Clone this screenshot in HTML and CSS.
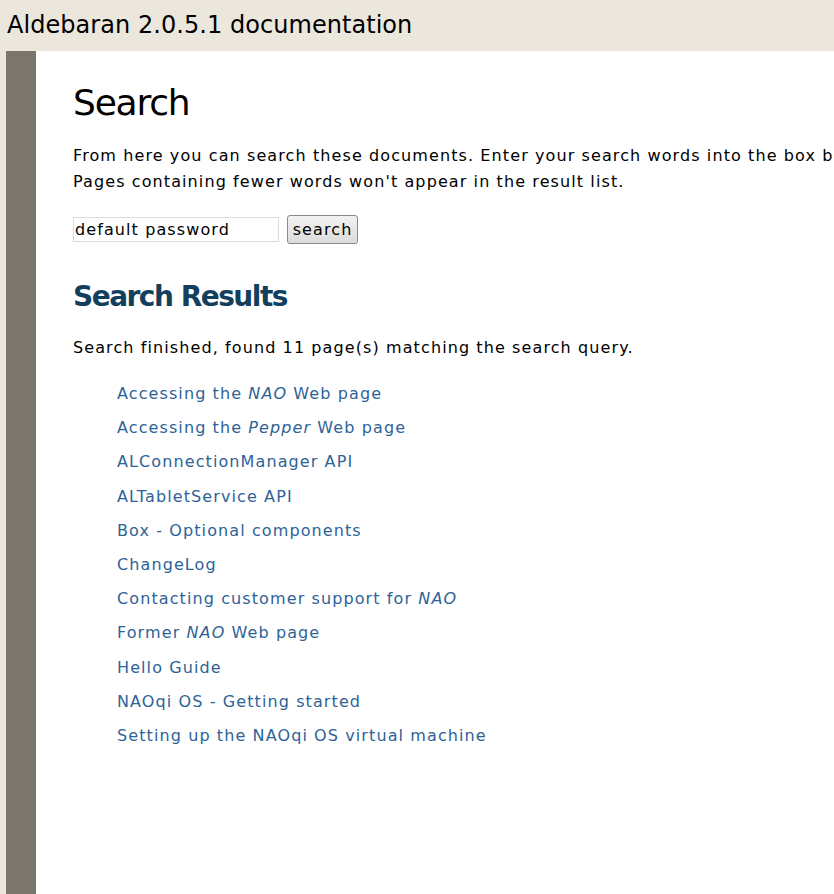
FILE: index.html
```html
<!DOCTYPE html>
<html>
<head>
<meta charset="utf-8">
<title>Search — Aldebaran 2.0.5.1 documentation</title>
<link rel="stylesheet" href="styles.css">
</head>
<body>
<header class="topbar">
  <div class="site-title">Aldebaran 2.0.5.1 documentation</div>
</header>
<div class="layout">
  <div class="edge"></div>
  <div class="sidebar"></div>
  <main class="content">
    <h1 class="title">Search</h1>
    <p class="intro">From here you can search these documents. Enter your search words into the box below and click "search". Note that the search function will automatically search for all of the words.<br>Pages containing fewer words won't appear in the result list.</p>
    <form class="search-form">
      <input class="search-input" type="text" value="default password">
      <button class="search-btn" type="button">search</button>
    </form>
    <h2 class="results-title">Search Results</h2>
    <p class="summary">Search finished, found 11 page(s) matching the search query.</p>
    <ul class="results">
      <li><a href="#">Accessing the <em>NAO</em> Web page</a></li>
      <li><a href="#">Accessing the <em>Pepper</em> Web page</a></li>
      <li><a href="#">ALConnectionManager API</a></li>
      <li><a href="#">ALTabletService API</a></li>
      <li><a href="#">Box - Optional components</a></li>
      <li><a href="#">ChangeLog</a></li>
      <li><a href="#">Contacting customer support for <em>NAO</em></a></li>
      <li><a href="#">Former <em>NAO</em> Web page</a></li>
      <li><a href="#">Hello Guide</a></li>
      <li><a href="#">NAOqi OS - Getting started</a></li>
      <li><a href="#">Setting up the NAOqi OS virtual machine</a></li>
    </ul>
  </main>
</div>
</body>
</html>
```
FILE: styles.css
```css
html, body {
  margin: 0;
  padding: 0;
  height: 100%;
  overflow: hidden;
}
body {
  font-family: "DejaVu Sans", Verdana, sans-serif;
  background: #ece7dd;
  color: #000;
  display: flex;
  flex-direction: column;
}
.topbar {
  height: 51px;
  background: #ece7dd;
  display: flex;
  align-items: center;
  padding-left: 7px;
  flex: none;
}
.site-title {
  font-size: 24px;
  letter-spacing: 0.05px;
  color: #000;
  margin-top: -2px;
}
.layout {
  flex: 1;
  display: flex;
}
.edge {
  width: 6px;
  background: #ece7dd;
  flex: none;
}
.sidebar {
  width: 30px;
  background: #7a766c;
  flex: none;
}
.content {
  flex: 1;
  background: #fff;
  padding: 0 0 0 37px;
  min-width: 0;
}
.title {
  font-size: 36px;
  font-weight: normal;
  letter-spacing: -1.2px;
  margin: 29px 0 0;
  line-height: 46px;
}
.intro {
  font-size: 16px;
  line-height: 26px;
  letter-spacing: 1.1px;
  white-space: nowrap;
  margin: 17px 0 0;
}
.search-form {
  display: flex;
  align-items: center;
  margin: 20px 0 0;
}
.search-input {
  width: 206px;
  height: 25px;
  box-sizing: border-box;
  border: 1px solid #dcdcdc;
  font-family: "DejaVu Sans", Verdana, sans-serif;
  font-size: 16px;
  letter-spacing: 1.1px;
  padding: 0 0 0 1px;
  margin: 0;
}
.search-btn {
  margin-left: 8px;
  height: 29px;
  width: 71px;
  box-sizing: border-box;
  border: 1px solid #8a8a8a;
  border-radius: 3px;
  background: linear-gradient(#f2f2f2, #dcdcdc);
  font-family: "DejaVu Sans", Verdana, sans-serif;
  font-size: 16px;
  letter-spacing: 1.1px;
  color: #000;
  padding: 0;
}
.results-title {
  font-size: 28px;
  font-weight: bold;
  color: #123f5e;
  letter-spacing: -1.5px;
  margin: 33px 0 0;
  line-height: 40px;
}
.summary {
  font-size: 16px;
  line-height: 26px;
  letter-spacing: 1.1px;
  margin: 18px 0 0;
}
.results {
  list-style: none;
  margin: 16px 0 0;
  padding: 0 0 0 44px;
}
.results li {
  font-size: 16px;
  line-height: 34.2px;
  letter-spacing: 1.1px;
}
.results a {
  color: #2e6398;
  text-decoration: none;
}
.results em {
  font-style: italic;
}
```
